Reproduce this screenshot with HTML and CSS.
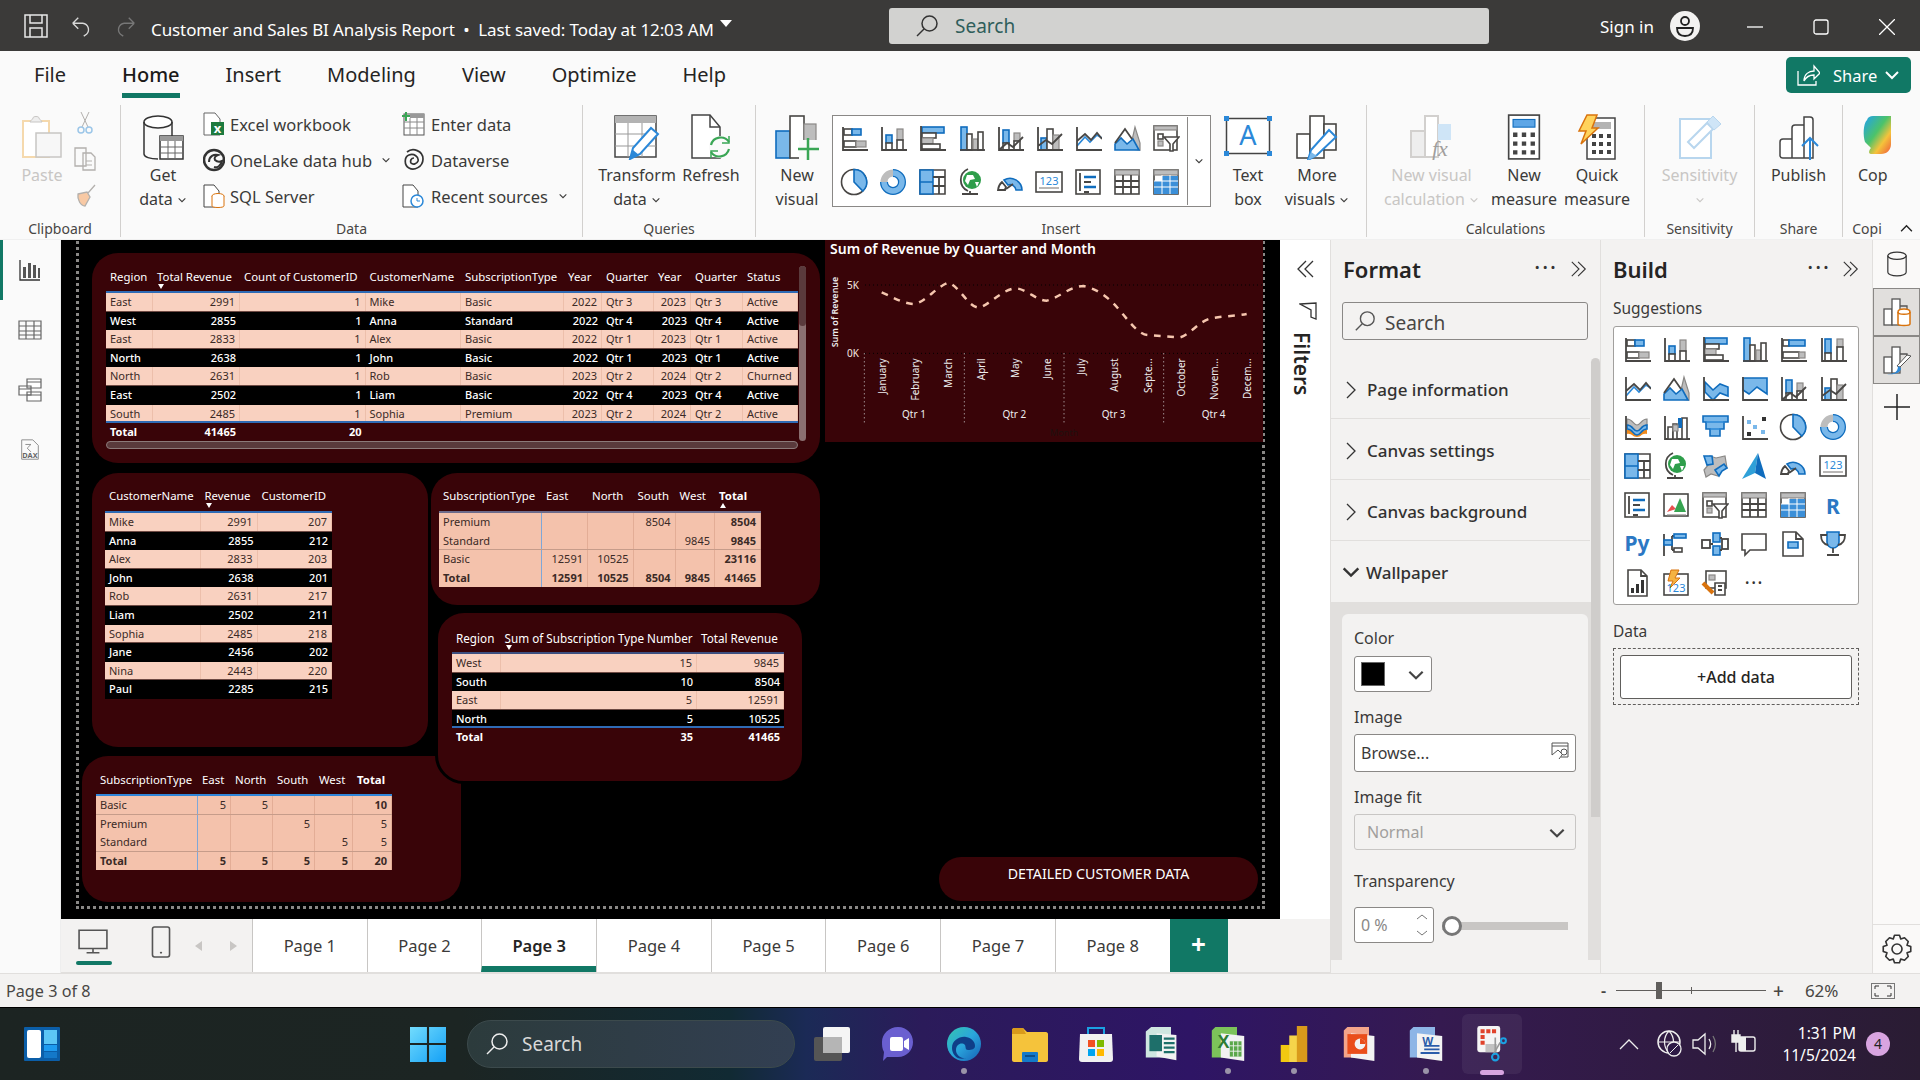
FILE: index.html
```html
<!DOCTYPE html>
<html lang="en">
<head>
<meta charset="utf-8">
<title>Customer and Sales BI Analysis Report</title>
<link rel="stylesheet" href="styles.css">
</head>
<body>
<svg class="defs" width="0" height="0">
<defs>
<linearGradient id="cop" x1="0" y1="0" x2="1" y2="1"><stop offset="0" stop-color="#1fa0f0"/><stop offset=".45" stop-color="#4cc36a"/><stop offset=".7" stop-color="#f5c33b"/><stop offset="1" stop-color="#ee5a3a"/></linearGradient>
<linearGradient id="st" x1="0" y1="0" x2="1" y2="1"><stop offset="0" stop-color="#72dcfd"/><stop offset="1" stop-color="#14a0f6"/></linearGradient>
<linearGradient id="edge" x1="0" y1="0" x2="1" y2="1"><stop offset="0" stop-color="#35c6b0"/><stop offset=".5" stop-color="#2aa5dc"/><stop offset="1" stop-color="#155fb5"/></linearGradient>
<symbol id="hstack" viewBox="0 0 28 28"><rect class="w" x="4" y="5" width="8" height="6"/><rect class="b" x="12" y="5" width="9" height="6"/><rect class="w" x="4" y="17" width="12" height="6"/><rect class="g" x="16" y="17" width="10" height="6"/><path class="k" d="M3 3v23h25"/></symbol>
<symbol id="vstack" viewBox="0 0 28 28"><rect class="b" x="7" y="11" width="6" height="8"/><rect class="w" x="7" y="19" width="6" height="7"/><rect class="g" x="18" y="5" width="6" height="11"/><rect class="w" x="18" y="16" width="6" height="10"/><path class="k" d="M3 3v23h25"/></symbol>
<symbol id="hclus" viewBox="0 0 28 28"><rect class="b" x="4" y="3" width="22" height="6"/><rect class="w" x="4" y="9" width="14" height="5"/><rect class="g" x="4" y="14" width="11" height="6"/><rect class="w" x="4" y="20" width="18" height="5"/><path class="k" d="M3 2v24h25"/></symbol>
<symbol id="vclus" viewBox="0 0 28 28"><rect class="b" x="4" y="3" width="6" height="23"/><rect class="w" x="10" y="10" width="5" height="16"/><rect class="g" x="16" y="15" width="5" height="11"/><rect class="w" x="21" y="8" width="5" height="18"/><path class="k" d="M3 26h25"/></symbol>
<symbol id="h100" viewBox="0 0 28 28"><rect class="w" x="4" y="5" width="6" height="6"/><rect class="b" x="10" y="5" width="16" height="6"/><rect class="w" x="4" y="17" width="16" height="6"/><rect class="g" x="20" y="17" width="6" height="6"/><path class="k" d="M3 3v23h25"/></symbol>
<symbol id="v100" viewBox="0 0 28 28"><rect class="b" x="6" y="4" width="6" height="14"/><rect class="w" x="6" y="18" width="6" height="8"/><rect class="g" x="18" y="4" width="6" height="8"/><rect class="w" x="18" y="12" width="6" height="14"/><path class="k" d="M3 3v23h25"/></symbol>
<symbol id="line" viewBox="0 0 28 28"><path class="l" d="M3 22 11 13l5 5 7-7 5 3"/><path class="k" d="M3 17l8-7 6 6 6-7 5 6M3 3v23h25"/></symbol>
<symbol id="area" viewBox="0 0 28 28"><path class="g" d="M17 25 22 3l5 16v7z"/><path class="b" d="M2 26v-6l6-6 6 6 6-5 6 11z"/><path class="k" d="M2 19 12 5l7 10"/></symbol>
<symbol id="starea" viewBox="0 0 28 28"><path class="b" d="M4 8l8 8 7-6 8 3v9l-8-3-7 7-8-8z"/><path class="k" d="M3 3v23h25"/></symbol>
<symbol id="a100" viewBox="0 0 28 28"><path class="b" d="M3 4h24v16l-10-7-8 7-6-4z"/><path class="k" d="M3 3v23h25"/></symbol>
<symbol id="lstack" viewBox="0 0 28 28"><rect class="b" x="7" y="6" width="6" height="13"/><rect class="w" x="7" y="19" width="6" height="7"/><rect class="g" x="18" y="9" width="6" height="8"/><rect class="w" x="18" y="17" width="6" height="9"/><path class="k" d="M3 26l8-7 6 4 10-10M3 3v23h25"/></symbol>
<symbol id="lclus" viewBox="0 0 28 28"><rect class="b" x="6" y="14" width="6" height="12"/><rect class="w" x="12" y="5" width="6" height="21"/><rect class="g" x="18" y="11" width="6" height="15"/><path class="k" d="M3 22l8-6 6 4 10-10M3 3v23h25"/></symbol>
<symbol id="ribbon" viewBox="0 0 28 28"><path class="g" d="M4 6c6 0 6 6 10 6s4-6 10-6v6c-6 0-6 6-10 6S10 12 4 12z"/><path d="M4 17c6-1 5 4 10 4s6-5 10-4v4c-6-1-5 3-10 3s-5-4-10-3z" fill="#f08a1c"/><path class="b" d="M4 12c6 0 6 6 10 6s4-6 10-6v4c-6 0-6 6-10 6S10 16 4 16z"/><path class="k" d="M3 3v23h25"/></symbol>
<symbol id="water" viewBox="0 0 28 28"><path class="k" d="M3 3v23h25"/><path class="w" d="M6 14h5v12H6zM20 5h5v21h-5z"/><path class="w" d="M11 11h4v15h-4z"/><rect x="16" y="5" width="4" height="10" fill="#0f6cbd"/><path class="g" d="M11 12h5v6h-5z"/></symbol>
<symbol id="funnel" viewBox="0 0 28 28"><path class="b" d="M2 3h25v6h-4v7h-4v7h-10v-7h-4V9H2z"/><path class="l" d="M5 9h19M9 16h11"/></symbol>
<symbol id="scatter" viewBox="0 0 28 28"><path class="k" d="M3 3v23h25"/><rect x="7" y="7" width="4" height="4" fill="#7ab8ea"/><rect x="22" y="4" width="4" height="4" fill="#333"/><rect x="13" y="12" width="4" height="4" fill="#7ab8ea"/><rect x="7" y="19" width="4" height="4" fill="#333"/><rect x="21" y="17" width="4" height="4" fill="#7ab8ea"/></symbol>
<symbol id="pie" viewBox="0 0 28 28"><circle class="w" cx="14" cy="14" r="12.5"/><path class="b" d="M14 1.5A12.5 12.5 0 0 1 22.800 23L14 14z"/></symbol>
<symbol id="donut" viewBox="0 0 28 28"><circle cx="14" cy="14" r="9" fill="none" stroke="#bdbdbd" stroke-width="7"/><path d="M14 5a9 9 0 1 1-9 9" fill="none" stroke="#0f6cbd" stroke-width="8"/><path d="M14 5a9 9 0 1 1-9 9" fill="none" stroke="#7ab8ea" stroke-width="5.500"/></symbol>
<symbol id="tree" viewBox="0 0 28 28"><path class="w" d="M2 2h25v24H2z"/><path class="b" d="M2 2h13v12H2zM2 14h13v12H2z"/><path class="k" d="M15 9h12M21 9v17M15 18h12"/></symbol>
<symbol id="globe" viewBox="0 0 28 28"><circle cx="15" cy="12" r="9" fill="#2e9e4b"/><path d="M10 7h6l2 4-5 1-2 5-3-4zM18 14h4l-2 5z" fill="#fff"/><path class="k" d="M11 1a12 12 0 0 0 0 22M5 26h16M13 23v3"/></symbol>
<symbol id="fmap" viewBox="0 0 28 28"><path class="g" d="M9 4l6 2 9-2 2 12-6 2-3 6-7-2-5 3-2-7 5-6z"/><path class="b" d="M3 4h8l1 8-6 1zM14 18l9-6 3 4-5 3-3 5z"/></symbol>
<symbol id="azmap" viewBox="0 0 28 28"><path d="M18 1 2 27l13-6z" fill="#2fa0d8"/><path d="M18 1l-3 20 11 6z" fill="#0f6cbd"/></symbol>
<symbol id="gauge" viewBox="0 0 28 28"><path class="k" d="M2 22a12 12 0 0 1 4-8l4 5a5 5 0 0 0-1 3z"/><path class="b" d="M8 12a12 12 0 0 1 18 10h-6a6 6 0 0 0-8-5z"/><path class="k" d="M10 21l7-5" stroke-width="2"/></symbol>
<symbol id="card" viewBox="0 0 28 28"><rect class="w" x="1" y="4" width="26" height="20"/><text class="n" x="14" y="17" text-anchor="middle">123</text><path class="g" d="M4 20h20"/></symbol>
<symbol id="multi" viewBox="0 0 28 28"><rect class="w" x="2" y="2" width="24" height="24"/><path class="l2" d="M10 9h12M10 19h12"/><path class="k" d="M6 5v18M10 14h7M10 24h5"/></symbol>
<symbol id="kpi" viewBox="0 0 28 28"><rect class="w" x="2" y="3" width="24" height="22"/><path d="M5 21l5-7 4 4z" fill="#e94f4f"/><path d="M12 21l6-14 6 14z" fill="#37a451"/><path class="g" d="M5 24h19"/></symbol>
<symbol id="slicer" viewBox="0 0 28 28"><rect class="w" x="2" y="2" width="23" height="24"/><rect class="g" x="2" y="2" width="23" height="4"/><rect class="w" x="6" y="10" width="5" height="5"/><rect class="g" x="6" y="17" width="5" height="5"/><path class="w" d="M12 13h15l-6 7v7h-3v-7z"/></symbol>
<symbol id="table" viewBox="0 0 28 28"><rect class="w" x="2" y="2" width="24" height="24"/><rect class="g" x="2" y="2" width="24" height="5"/><path class="k" d="M10 7v19M18 7v19M2 13h24M2 19h24"/></symbol>
<symbol id="matrix" viewBox="0 0 28 28"><rect class="w" x="2" y="2" width="24" height="24"/><rect x="10" y="8" width="16" height="18" fill="#3b8fd8"/><rect x="2" y="13" width="8" height="13" fill="#3b8fd8"/><rect class="g" x="2" y="2" width="24" height="5"/><path class="wl" d="M10 7v19M18 7v19M2 13h24M2 19h24"/></symbol>
<symbol id="rlang" viewBox="0 0 28 28"><text class="rl" x="14" y="23" text-anchor="middle">R</text></symbol>
<symbol id="py" viewBox="0 0 28 28"><text class="rl" x="14" y="21" text-anchor="middle">Py</text></symbol>
<symbol id="decomp" viewBox="0 0 28 28"><path class="k" d="M2 4v22M2 13h8M10 6h14M10 20h8M10 6v14"/><rect class="b" x="2" y="10" width="8" height="5"/><rect class="b" x="12" y="4" width="12" height="4"/><rect class="w" x="12" y="18" width="8" height="4"/></symbol>
<symbol id="keyinf" viewBox="0 0 28 28"><rect class="k" x="1" y="10" width="8" height="8"/><rect class="b" x="12" y="3" width="7" height="9"/><rect class="b" x="12" y="16" width="7" height="9"/><rect class="k" x="21" y="9" width="6" height="10"/><path class="k" d="M9 14h3M19 8h2M19 20h2"/></symbol>
<symbol id="qa" viewBox="0 0 28 28"><path class="w" d="M2 4h24v16H10l-5 5v-5H2z"/></symbol>
<symbol id="pagin" viewBox="0 0 28 28"><path class="w" d="M4 2h13l7 7v17H4z"/><path class="b" d="M9 12h10v6H9z"/><path class="k" d="M17 2v7h7"/></symbol>
<symbol id="trophy" viewBox="0 0 28 28"><path class="b" d="M8 2h12v10a6 6 0 0 1-12 0z"/><path class="k" d="M8 5H2c0 6 2 9 7 10M20 5h6c0 6-2 9-7 10M14 18v5M8 25h12"/></symbol>
<symbol id="report" viewBox="0 0 28 28"><path class="w" d="M5 1h13l6 6v20H5z"/><path class="k" d="M18 1v6h6"/><rect x="8" y="19" width="3" height="5" fill="#333"/><rect x="13" y="15" width="3" height="9" fill="#333"/><rect x="18" y="11" width="3" height="13" fill="#333"/></symbol>
<symbol id="powerbi" viewBox="0 0 28 28"><rect class="w" x="2" y="5" width="24" height="21"/><path d="M9 1h8l-4 8h5L8 19l3-7H6z" fill="#f5b342" stroke="#d9730d"/><text class="n" x="14" y="23" text-anchor="middle">123</text></symbol>
<symbol id="papps" viewBox="0 0 28 28"><rect class="w" x="5" y="2" width="20" height="17"/><rect class="g" x="8" y="6" width="6" height="5"/><path d="M2 14l10 10" stroke="#d9730d" stroke-width="4"/><path class="w" d="M14 14h10v12H14z"/><path class="k" d="M17 17h4M17 21h4"/></symbol>
<symbol id="xbar" viewBox="0 0 44 46"><rect class="b" x="1" y="17" width="14" height="27"/><rect class="w" x="15" y="2" width="14" height="42"/><rect class="g" x="29" y="10" width="12" height="28"/><rect x="24" y="26" width="20" height="20" fill="#fafafa"/><path d="M33 24v22M23 35h21" stroke="#3aa655" stroke-width="2.500"/></symbol>
<symbol id="more" viewBox="0 0 44 46"><rect class="w" x="2" y="20" width="13" height="24"/><rect class="w" x="15" y="2" width="14" height="42"/><rect class="w" x="29" y="10" width="12" height="26"/><path d="M13 46l3-10L34 16l7 7-19 18z" fill="#fff" stroke="#2b88d8" stroke-width="2"/><path d="M13 46l3-8 6 4z" fill="#7ab8ea"/></symbol>
<symbol id="paste" viewBox="0 0 40 44"><rect x="1" y="6" width="26" height="36" fill="#fff" stroke="#f5d9ad" stroke-width="2"/><path d="M8 7c0-2 3-2 3-4s6-2 6 0 3 2 3 4z" fill="#eee" stroke="#c8c6c4"/><rect x="14" y="18" width="25" height="24" fill="#f7f7f7" stroke="#c8c6c4" stroke-width="1.500"/></symbol>
<symbol id="getdata" viewBox="0 0 42 46"><ellipse cx="16" cy="8" rx="14" ry="6" fill="#fff" stroke="#333" stroke-width="1.500"/><path d="M2 8v32c0 3 6 5 14 5" fill="none" stroke="#333" stroke-width="1.500"/><path d="M30 8v14" stroke="#333" stroke-width="1.500"/><rect x="18" y="22" width="23" height="23" fill="#fff" stroke="#333" stroke-width="1.500"/><rect x="18" y="22" width="23" height="5" fill="#999"/><path d="M26 27v18M33 27v18M18 33h23M18 39h23" stroke="#666"/></symbol>
<symbol id="transform" viewBox="0 0 46 46"><rect x="1" y="2" width="41" height="41" fill="#fff" stroke="#444" stroke-width="1.500"/><rect x="1" y="2" width="41" height="7" fill="#b3b3b3"/><path d="M14 9v34M28 9v34M1 20h41M1 32h41" stroke="#999"/><path d="M16 45l3-11 18-20 7 6-18 20z" fill="#fff" stroke="#2b88d8" stroke-width="2"/><path d="M16 45l3-9 6 5z" fill="#2b88d8"/></symbol>
<symbol id="refresh" viewBox="0 0 42 46"><path d="M2 1h18l10 12v31H2z" fill="#fff" stroke="#444" stroke-width="1.500"/><path d="M20 1v12h10" fill="none" stroke="#444" stroke-width="1.500"/><circle cx="30" cy="33" r="11" fill="#fafafa"/><path d="M21 31a10 10 0 0 1 18-3M39 35a10 10 0 0 1-18 3" fill="none" stroke="#3aa655" stroke-width="2.200"/><path d="M39 22v7h-7M21 44v-7h7" fill="none" stroke="#3aa655" stroke-width="1.500"/></symbol>
<symbol id="textbox" viewBox="0 0 48 40"><rect x="2.500" y="2.500" width="43" height="35" fill="#fff" stroke="#444" stroke-width="1.500"/><text class="ta" x="24" y="29" text-anchor="middle">A</text><path d="M0 0h5v5H0zM43 0h5v5h-5zM0 35h5v5H0zM43 35h5v5h-5z" fill="#2b88d8"/></symbol>
<symbol id="vcalc" viewBox="0 0 44 46"><rect x="1" y="17" width="14" height="26" fill="#eee" stroke="#d2d0ce" stroke-width="2"/><rect x="15" y="2" width="13" height="41" fill="#fff" stroke="#d2d0ce" stroke-width="2"/><rect x="28" y="10" width="13" height="16" fill="#cfe5f7"/><text class="fx" x="22" y="42">fx</text></symbol>
<symbol id="calc" viewBox="0 0 30 42"><rect x="1" y="1" width="28" height="40" fill="#fff" stroke="#444" stroke-width="1.500"/><rect x="5" y="5" width="20" height="7" fill="#5ea6e6" stroke="#0f6cbd"/><path d="M5 17h4v4H5zM13 17h4v4h-4zM21 17h4v4h-4zM5 25h4v4H5zM13 25h4v4h-4zM21 25h4v4h-4zM5 33h4v4H5zM13 33h4v4h-4zM21 33h4v4h-4z" fill="#444"/></symbol>
<symbol id="quick" viewBox="0 0 38 46"><rect x="9" y="4" width="28" height="41" fill="#fff" stroke="#444" stroke-width="1.500"/><rect x="13" y="8" width="20" height="7" fill="#b3b3b3"/><path d="M14 20h4v4h-4zM21 20h4v4h-4zM29 20h4v4h-4zM14 28h4v4h-4zM21 28h4v4h-4zM29 28h4v4h-4zM14 36h4v4h-4zM21 36h4v4h-4zM29 36h4v4h-4z" fill="#444"/><path d="M9 1h10l-5 13h6L3 30l5-13H1z" fill="#ffd35c" stroke="#d9730d" stroke-width="1.500"/></symbol>
<symbol id="sens" viewBox="0 0 42 46"><rect x="1" y="5" width="31" height="39" fill="#fff" stroke="#b8d6ee" stroke-width="2"/><path d="M9 28 28 9l6 6-19 19z" fill="#fff" stroke="#b8d6ee" stroke-width="2"/><path d="M28 8l6-6 8 8-7 6z" fill="#cfe5f7" stroke="#b8d6ee"/></symbol>
<symbol id="publish" viewBox="0 0 40 46"><path d="M1 42V28a3 3 0 0 1 3-3h9v19H4a3 3 0 0 1-3-2zM13 14a3 3 0 0 1 3-3h9v33H13zM25 3h6a3 3 0 0 1 3 3v38h-9z" fill="#fff" stroke="#444" stroke-width="1.500"/><path d="M31 46V24M23 32l8-8 8 8" fill="none" stroke="#2b88d8" stroke-width="2"/></symbol>
<symbol id="search" viewBox="0 0 24 24"><circle cx="14.500" cy="9.500" r="7.500" fill="none" stroke="currentColor" stroke-width="1.500"/><path d="M9 15 2 22" stroke="currentColor" stroke-width="1.500"/></symbol>
<symbol id="chev" viewBox="0 0 12 12"><path d="M2 4l4 4 4-4" fill="none" stroke="currentColor" stroke-width="1.300"/></symbol>
<symbol id="right" viewBox="0 0 12 20"><path d="M2 2l8 8-8 8" fill="none" stroke="currentColor" stroke-width="1.300"/></symbol>
<symbol id="dbl" viewBox="0 0 20 20"><path d="M2 2l8 8-8 8M9 2l8 8-8 8" fill="none" stroke="currentColor" stroke-width="1.200"/></symbol>
<symbol id="dbll" viewBox="0 0 20 20"><path d="M18 2l-8 8 8 8M11 2l-8 8 8 8" fill="none" stroke="currentColor" stroke-width="1.300"/></symbol>
</defs>
</svg>

<div class="app">
  <header class="titlebar">
    <svg class="tb-save" viewBox="0 0 24 24"><path d="M1 1h22v22H1zM6 1v8h12V1M6 23v-9h12v9" fill="none" stroke="#e8e8e8" stroke-width="1.500"/></svg>
    <svg class="tb-undo" viewBox="0 0 24 24"><path d="M3 9h11a7 7 0 0 1 4 12l-3 2M3 9l6-6M3 9l6 6" fill="none" stroke="#d8d8d8" stroke-width="1.500"/></svg>
    <svg class="tb-redo" viewBox="0 0 24 24"><path d="M21 9H10a7 7 0 0 0-4 12l3 2M21 9l-6-6M21 9l-6 6" fill="none" stroke="#777" stroke-width="1.500"/></svg>
    <span class="tb-title">Customer and Sales BI Analysis Report&nbsp;&nbsp;•&nbsp;&nbsp;Last saved: Today at 12:03 AM</span>
    <span class="tb-caret"></span>
    <div class="tb-search"><svg class="tb-sicon"><use href="#search"/></svg><span>Search</span></div>
    <span class="tb-sign">Sign in</span>
    <svg class="tb-avatar" viewBox="0 0 30 30"><circle cx="15" cy="15" r="15" fill="#f3f2f1"/><circle cx="15" cy="10" r="4" fill="none" stroke="#222" stroke-width="1.800"/><path d="M7 17h16c0 5-3 8-8 8s-8-3-8-8z" fill="none" stroke="#222" stroke-width="1.800"/></svg>
    <div class="tb-win">
      <svg viewBox="0 0 16 16"><path d="M0 8h16" stroke="#fff" stroke-width="1.300"/></svg>
      <svg viewBox="0 0 16 16"><rect x="1" y="1" width="14" height="14" rx="2" fill="none" stroke="#fff" stroke-width="1.300"/></svg>
      <svg viewBox="0 0 16 16"><path d="M0 0l16 16M16 0 0 16" stroke="#fff" stroke-width="1.300"/></svg>
    </div>
  </header>

  <nav class="tabs">
    <span class="tab t-file">File</span><span class="tab on">Home</span><span class="tab">Insert</span><span class="tab">Modeling</span><span class="tab">View</span><span class="tab">Optimize</span><span class="tab">Help</span>
    <button class="share"><svg viewBox="0 0 24 24"><path d="M2 8v14h18v-4M8 18c0-7 5-10 10-10V3l6 7-6 6v-4c-5 0-8 2-10 6z" fill="none" stroke="#fff" stroke-width="1.300"/></svg><span>Share</span><svg class="share-chev"><use href="#chev"/></svg></button>
  </nav>

  <section class="ribbon">
    <div class="grp g-clip">
      <div class="grp-body">
        <div class="big paste"><svg class="ico-paste"><use href="#paste"/></svg><span class="lbl dis">Paste</span></div>
        <div class="mini">
          <svg viewBox="0 0 16 24"><path d="M4 1l7 15M12 1 5 16" stroke="#b3b0ad" fill="none"/><circle cx="4" cy="19" r="3" fill="none" stroke="#9cc6e8" stroke-width="1.500"/><circle cx="12" cy="19" r="3" fill="none" stroke="#9cc6e8" stroke-width="1.500"/></svg>
          <svg viewBox="0 0 24 24"><path d="M2 1h11v18H2zM10 6h8l4 4v13H10z" fill="#fafafa" stroke="#b3b0ad" stroke-width="1.300"/><path d="M13 14h6M13 18h6" stroke="#b3b0ad"/></svg>
          <svg viewBox="0 0 24 24"><path d="M15 10 22 2M5 11l9-2 3 5-5 9c-4 0-8-6-7-12z" fill="#f8c9a4" stroke="#b3b0ad" stroke-width="1.300"/></svg>
        </div>
      </div>
      <div class="grp-lbl">Clipboard</div>
    </div>

    <div class="grp g-data">
      <div class="grp-body">
        <div class="big getdata"><svg class="ico-46"><use href="#getdata"/></svg><span class="lbl">Get</span><span class="lbl">data <svg class="cv"><use href="#chev"/></svg></span></div>
        <div class="slist c2">
          <div class="srow"><svg viewBox="0 0 22 24"><path d="M1 1h11l5 6v16H1z" fill="#fff" stroke="#666"/><rect x="8" y="10" width="13" height="13" fill="#1d7a3e"/><text class="xl" x="14.500" y="21" text-anchor="middle">x</text></svg><span>Excel workbook</span></div>
          <div class="srow"><svg viewBox="0 0 22 24"><circle cx="11" cy="12" r="10" fill="none" stroke="#333" stroke-width="2.500"/><path d="M6 14c0-6 5-8 9-7-3 1-4 3-3 5 2 2 5 2 7 1-1 5-5 7-8 6" fill="none" stroke="#333" stroke-width="2"/></svg><span>OneLake data hub</span><svg class="cv"><use href="#chev"/></svg></div>
          <div class="srow"><svg viewBox="0 0 22 24"><path d="M1 1h10l5 6v16H1z" fill="#fff" stroke="#444"/><ellipse cx="15" cy="12" rx="6" ry="2.500" fill="#fff" stroke="#d9730d"/><path d="M9 12v10c0 2 12 2 12 0V12" fill="#fff" stroke="#d9730d"/></svg><span>SQL Server</span></div>
        </div>
        <div class="slist c3">
          <div class="srow"><svg viewBox="0 0 24 24"><rect x="3" y="2" width="20" height="21" fill="#fff" stroke="#555"/><rect x="9" y="2" width="14" height="4" fill="#999"/><path d="M3 10h20M3 16h20M9 6v17M16 6v17" stroke="#888"/><path d="M5 0v9M1 4h8" stroke="#3aa655" stroke-width="2"/></svg><span>Enter data</span></div>
          <div class="srow"><svg viewBox="0 0 24 24"><path d="M6 4c6-5 16-1 16 7 0 8-9 12-14 9C3 17 3 9 8 7c5-2 10 2 9 6-1 3-5 4-7 2-1-2 0-5 3-5" fill="none" stroke="#333" stroke-width="1.700"/></svg><span>Dataverse</span></div>
          <div class="srow"><svg viewBox="0 0 24 24"><path d="M2 1h10l5 6v16H2z" fill="#fff" stroke="#444"/><circle cx="16" cy="17" r="6" fill="#fff" stroke="#2b88d8" stroke-width="1.500"/><path d="M16 14v3h3" fill="none" stroke="#2b88d8"/></svg><span>Recent sources</span><svg class="cv"><use href="#chev"/></svg></div>
        </div>
      </div>
      <div class="grp-lbl">Data</div>
    </div>

    <div class="grp g-query">
      <div class="grp-body">
        <div class="big w74"><svg class="ico-46"><use href="#transform"/></svg><span class="lbl">Transform</span><span class="lbl">data <svg class="cv"><use href="#chev"/></svg></span></div>
        <div class="big w74"><svg class="ico-46"><use href="#refresh"/></svg><span class="lbl">Refresh</span></div>
      </div>
      <div class="grp-lbl">Queries</div>
    </div>

    <div class="grp g-insert">
      <div class="grp-body">
        <div class="big w70"><svg class="ico-46"><use href="#xbar"/></svg><span class="lbl">New</span><span class="lbl">visual</span></div>
        <div class="gallery">
          <div class="gal-grid">
            <svg><use href="#hstack"/></svg><svg><use href="#vstack"/></svg><svg><use href="#hclus"/></svg><svg><use href="#vclus"/></svg><svg><use href="#lstack"/></svg><svg><use href="#lclus"/></svg><svg><use href="#line"/></svg><svg><use href="#area"/></svg><svg><use href="#slicer"/></svg>
            <svg><use href="#pie"/></svg><svg><use href="#donut"/></svg><svg><use href="#tree"/></svg><svg><use href="#globe"/></svg><svg><use href="#gauge"/></svg><svg><use href="#card"/></svg><svg><use href="#multi"/></svg><svg><use href="#table"/></svg><svg><use href="#matrix"/></svg>
          </div>
          <div class="gal-more"><svg class="cv"><use href="#chev"/></svg></div>
        </div>
        <div class="big w74 tbx"><svg class="ico-tb"><use href="#textbox"/></svg><span class="lbl">Text</span><span class="lbl">box</span></div>
        <div class="big w64"><svg class="ico-46"><use href="#more"/></svg><span class="lbl">More</span><span class="lbl">visuals <svg class="cv"><use href="#chev"/></svg></span></div>
      </div>
      <div class="grp-lbl">Insert</div>
    </div>

    <div class="grp g-calc">
      <div class="grp-body">
        <div class="big w101"><svg class="ico-46"><use href="#vcalc"/></svg><span class="lbl dis">New visual</span><span class="lbl dis">calculation <svg class="cv"><use href="#chev"/></svg></span></div>
        <div class="big w84"><svg class="ico-46"><use href="#calc"/></svg><span class="lbl">New</span><span class="lbl">measure</span></div>
        <div class="big w62"><svg class="ico-46"><use href="#quick"/></svg><span class="lbl">Quick</span><span class="lbl">measure</span></div>
      </div>
      <div class="grp-lbl">Calculations</div>
    </div>

    <div class="grp g-sens">
      <div class="grp-body">
        <div class="big wfull"><svg class="ico-46"><use href="#sens"/></svg><span class="lbl dis">Sensitivity</span><span class="lbl dis"><svg class="cv"><use href="#chev"/></svg></span></div>
      </div>
      <div class="grp-lbl">Sensitivity</div>
    </div>

    <div class="grp g-share">
      <div class="grp-body">
        <div class="big wfull"><svg class="ico-46"><use href="#publish"/></svg><span class="lbl">Publish</span></div>
      </div>
      <div class="grp-lbl">Share</div>
    </div>

    <div class="grp g-cop">
      <div class="grp-body">
        <div class="big copilot"><svg class="ico-cop" viewBox="0 0 28 44"><path d="M10 2h18v28c0 6-4 10-10 10H8c-3 0-2-4 0-6L2 28C0 22 0 10 4 6c1-3 3-4 6-4z" fill="url(#cop)"/></svg><span class="lbl">Cop</span></div>
      </div>
      <div class="grp-lbl">Copi</div>
    </div>
    <svg class="rb-collapse" viewBox="0 0 14 10"><path d="M1 8l6-6 6 6" fill="none" stroke="#222" stroke-width="1.500"/></svg>
  </section>

  <main class="work">
    <aside class="rail">
      <div class="rail-btn on"><svg viewBox="0 0 24 24"><path d="M2 2v20h20" fill="none" stroke="#333" stroke-width="1.300"/><path d="M5 20V9h3v11zM10 20V5h3v15zM15 20V7h3v13zM20 20V10h2v10z" fill="#555"/></svg></div>
      <div class="rail-btn"><svg viewBox="0 0 24 24"><path d="M1 3h22v18H1zM1 8h22M1 13h22M1 17h22M8 3v18M16 3v18" fill="none" stroke="#666" stroke-width="1.200"/></svg></div>
      <div class="rail-btn"><svg viewBox="0 0 24 24"><path d="M9 1h14v9H9zM1 8h12v9H1zM9 14h14v9H9z" fill="#fff" stroke="#666" stroke-width="1.200"/><path d="M1 11h12M9 4h14M9 17h14" stroke="#666"/></svg></div>
      <div class="rail-btn"><svg viewBox="0 0 26 26"><path d="M4 2h12l6 6v15H4z" fill="none" stroke="#888"/><text class="dax" x="13" y="22" text-anchor="middle">DAX</text><path d="M8 7h6l-4 4 4 4" fill="none" stroke="#888"/></svg></div>
    </aside>

    <div class="center">
      <div class="stage">
        <div class="canvas">
          <div class="dots"></div>

          <div class="panel p1">
            <div class="tbl t1">
              <div class="row hd"><span>Region</span><span class="sort">Total Revenue</span><span>Count of CustomerID</span><span>CustomerName</span><span>SubscriptionType</span><span>Year</span><span>Quarter</span><span>Year</span><span>Quarter</span><span>Status</span></div>
              <div class="row o"><span>East</span><span class="r">2991</span><span class="r">1</span><span>Mike</span><span>Basic</span><span class="r">2022</span><span>Qtr 3</span><span class="r">2023</span><span>Qtr 3</span><span>Active</span></div>
              <div class="row e"><span>West</span><span class="r">2855</span><span class="r">1</span><span>Anna</span><span>Standard</span><span class="r">2022</span><span>Qtr 4</span><span class="r">2023</span><span>Qtr 4</span><span>Active</span></div>
              <div class="row o"><span>East</span><span class="r">2833</span><span class="r">1</span><span>Alex</span><span>Basic</span><span class="r">2022</span><span>Qtr 1</span><span class="r">2023</span><span>Qtr 1</span><span>Active</span></div>
              <div class="row e"><span>North</span><span class="r">2638</span><span class="r">1</span><span>John</span><span>Basic</span><span class="r">2022</span><span>Qtr 1</span><span class="r">2023</span><span>Qtr 1</span><span>Active</span></div>
              <div class="row o"><span>North</span><span class="r">2631</span><span class="r">1</span><span>Rob</span><span>Basic</span><span class="r">2023</span><span>Qtr 2</span><span class="r">2024</span><span>Qtr 2</span><span>Churned</span></div>
              <div class="row e"><span>East</span><span class="r">2502</span><span class="r">1</span><span>Liam</span><span>Basic</span><span class="r">2022</span><span>Qtr 4</span><span class="r">2023</span><span>Qtr 4</span><span>Active</span></div>
              <div class="row o last"><span>South</span><span class="r">2485</span><span class="r">1</span><span>Sophia</span><span>Premium</span><span class="r">2023</span><span>Qtr 2</span><span class="r">2024</span><span>Qtr 2</span><span>Active</span></div>
              <div class="row tot"><span>Total</span><span class="r">41465</span><span class="r">20</span><span></span><span></span><span></span><span></span><span></span><span></span><span></span></div>
            </div>
            <div class="sb-h"></div>
            <div class="sb-v"><div class="sb-v-thumb"></div></div>
          </div>

          <div class="panel p2">
            <div class="tbl t2">
              <div class="row hd"><span>CustomerName</span><span class="sort">Revenue</span><span>CustomerID</span></div>
              <div class="row o"><span>Mike</span><span class="r">2991</span><span class="r">207</span></div>
              <div class="row e"><span>Anna</span><span class="r">2855</span><span class="r">212</span></div>
              <div class="row o"><span>Alex</span><span class="r">2833</span><span class="r">203</span></div>
              <div class="row e"><span>John</span><span class="r">2638</span><span class="r">201</span></div>
              <div class="row o"><span>Rob</span><span class="r">2631</span><span class="r">217</span></div>
              <div class="row e"><span>Liam</span><span class="r">2502</span><span class="r">211</span></div>
              <div class="row o"><span>Sophia</span><span class="r">2485</span><span class="r">218</span></div>
              <div class="row e"><span>Jane</span><span class="r">2456</span><span class="r">202</span></div>
              <div class="row o"><span>Nina</span><span class="r">2443</span><span class="r">220</span></div>
              <div class="row e"><span>Paul</span><span class="r">2285</span><span class="r">215</span></div>
            </div>
          </div>

          <div class="panel p3">
            <div class="tbl t3">
              <div class="row hd"><span>SubscriptionType</span><span>East</span><span>North</span><span>South</span><span>West</span><span class="bd sort up">Total</span></div>
              <div class="row m"><span>Premium</span><span class="r"></span><span class="r"></span><span class="r">8504</span><span class="r"></span><span class="r bd">8504</span></div>
              <div class="row m sep"><span>Standard</span><span class="r"></span><span class="r"></span><span class="r"></span><span class="r">9845</span><span class="r bd">9845</span></div>
              <div class="row m"><span>Basic</span><span class="r">12591</span><span class="r">10525</span><span class="r"></span><span class="r"></span><span class="r bd">23116</span></div>
              <div class="row m bd"><span>Total</span><span class="r">12591</span><span class="r">10525</span><span class="r">8504</span><span class="r">9845</span><span class="r">41465</span></div>
            </div>
          </div>

          <div class="panel p5">
            <div class="tbl t5">
              <div class="row hd"><span>SubscriptionType</span><span>East</span><span>North</span><span>South</span><span>West</span><span class="bd">Total</span></div>
              <div class="row m sep"><span>Basic</span><span class="r">5</span><span class="r">5</span><span class="r"></span><span class="r"></span><span class="r bd">10</span></div>
              <div class="row m"><span>Premium</span><span class="r"></span><span class="r"></span><span class="r">5</span><span class="r"></span><span class="r">5</span></div>
              <div class="row m sep"><span>Standard</span><span class="r"></span><span class="r"></span><span class="r"></span><span class="r">5</span><span class="r">5</span></div>
              <div class="row m bd"><span>Total</span><span class="r">5</span><span class="r">5</span><span class="r">5</span><span class="r">5</span><span class="r">20</span></div>
            </div>
          </div>

          <div class="panel p4">
            <div class="tbl t4">
              <div class="row hd"><span>Region</span><span class="sort">Sum of Subscription Type Number</span><span>Total Revenue</span></div>
              <div class="row o"><span>West</span><span class="r">15</span><span class="r">9845</span></div>
              <div class="row e"><span>South</span><span class="r">10</span><span class="r">8504</span></div>
              <div class="row o"><span>East</span><span class="r">5</span><span class="r">12591</span></div>
              <div class="row e last"><span>North</span><span class="r">5</span><span class="r">10525</span></div>
              <div class="row tot"><span>Total</span><span class="r">35</span><span class="r">41465</span></div>
            </div>
          </div>

          <div class="chart">
            <svg viewBox="15 0 1314 606" width="438" height="202">
              <text class="c-title" x="30" y="41">Sum of Revenue by Quarter and Month</text>
              <text class="c-axt" transform="translate(53,322) rotate(-90)">Sum of Revenue</text>
              <text class="c-y" x="117" y="147" text-anchor="end">5K</text>
              <text class="c-y" x="117" y="351" text-anchor="end">0K</text>
              <path class="c-grid" d="M135 135H1330M135 340H1330"/>
              <path class="c-grid" d="M133 340V552M433 340V552M732 340V552M1031 340V552"/>
              <path class="c-line" d="M185 157C220 172 250 192 285 192C320 182 350 140 385 128C420 140 445 203 478 203C515 190 550 145 590 145C625 150 650 182 680 182C715 175 750 138 790 138C825 145 855 165 880 190C915 225 950 285 985 285L1080 292C1110 285 1140 240 1175 235C1210 228 1250 228 1280 222"/>
              <g class="c-m">
                <text transform="translate(197,355) rotate(-90)">January</text>
                <text transform="translate(296,355) rotate(-90)">February</text>
                <text transform="translate(397,355) rotate(-90)">March</text>
                <text transform="translate(496,355) rotate(-90)">April</text>
                <text transform="translate(596,355) rotate(-90)">May</text>
                <text transform="translate(694,355) rotate(-90)">June</text>
                <text transform="translate(796,355) rotate(-90)">July</text>
                <text transform="translate(895,355) rotate(-90)">August</text>
                <text transform="translate(995,355) rotate(-90)">Septe...</text>
                <text transform="translate(1094,355) rotate(-90)">October</text>
                <text transform="translate(1194,355) rotate(-90)">Novem...</text>
                <text transform="translate(1294,355) rotate(-90)">Decem...</text>
              </g>
              <g class="c-q">
                <text x="282" y="533">Qtr 1</text><text x="583" y="533">Qtr 2</text><text x="881" y="533">Qtr 3</text><text x="1181" y="533">Qtr 4</text>
              </g>
              <text class="c-month" x="732" y="587">Month</text>
            </svg>
          </div>

          <div class="pill">DETAILED CUSTOMER DATA</div>
        </div>

        <aside class="filters">
          <svg class="f-dbl"><use href="#dbll"/></svg>
          <svg class="f-fun" viewBox="0 0 18 18"><path d="M1 2 17 1v16l-5-2V8z" fill="none" stroke="#333" stroke-width="1.300"/></svg>
          <span class="f-txt">Filters</span>
        </aside>
      </div>

      <footer class="pagebar">
        <div class="pb-tools">
          <div class="pb-dev on"><svg viewBox="0 0 28 24"><path d="M1 1h26v17H1zM14 18v4M8 22h12" fill="none" stroke="#555" stroke-width="1.500"/></svg></div>
          <div class="pb-dev ph"><svg viewBox="0 0 18 30"><rect x="1" y="1" width="16" height="28" rx="2" fill="none" stroke="#555" stroke-width="1.500"/><path d="M8 25h2" stroke="#555" stroke-width="1.500"/></svg></div>
          <span class="pb-arrow l"></span><span class="pb-arrow"></span>
        </div>
        <span class="pg">Page 1</span><span class="pg">Page 2</span><span class="pg on">Page 3</span><span class="pg">Page 4</span><span class="pg">Page 5</span><span class="pg">Page 6</span><span class="pg">Page 7</span><span class="pg">Page 8</span><span class="pg-add">+</span>
      </footer>
    </div>

    <section class="format">
      <div class="p-head"><h2>Format</h2><span class="p-dots">···</span><svg class="p-dbl"><use href="#dbl"/></svg></div>
      <div class="f-search"><svg class="fs-i"><use href="#search"/></svg><span>Search</span></div>
      <div class="sec first"><svg class="sec-r"><use href="#right"/></svg><span>Page information</span></div>
      <div class="sec"><svg class="sec-r"><use href="#right"/></svg><span>Canvas settings</span></div>
      <div class="sec"><svg class="sec-r"><use href="#right"/></svg><span>Canvas background</span></div>
      <div class="sec nob"><svg class="sec-d"><use href="#chev"/></svg><span>Wallpaper</span></div>
      <div class="wp">
        <div class="wp-card">
          <label>Color</label>
          <div class="fld clr"><i class="swatch"></i><svg class="f-chev"><use href="#chev"/></svg></div>
          <label>Image</label>
          <div class="fld brw"><span>Browse...</span><svg class="brw-i" viewBox="0 0 18 18"><path d="M1 1h16v14H10M1 4h16M1 1v12l6-5 3 3" fill="none" stroke="#555"/><circle cx="13" cy="10" r="3" fill="none" stroke="#555"/><path d="M11 13l-3 4" stroke="#555"/></svg></div>
          <label>Image fit</label>
          <div class="fld nrm"><span>Normal</span><svg class="f-chev"><use href="#chev"/></svg></div>
          <label class="tr">Transparency</label>
          <div class="tr-row">
            <div class="fld pct"><span>0 %</span><div class="spin"><svg viewBox="0 0 12 6"><path d="M1 5l5-4 5 4" fill="none" stroke="#777"/></svg><svg viewBox="0 0 12 6"><path d="M1 1l5 4 5-4" fill="none" stroke="#777"/></svg></div></div>
            <div class="slider"><i class="knob"></i></div>
          </div>
        </div>
      </div>
      <div class="f-sb"></div>
    </section>

    <section class="build">
      <div class="p-head"><h2>Build</h2><span class="p-dots">···</span><svg class="p-dbl"><use href="#dbl"/></svg></div>
      <div class="b-lbl">Suggestions</div>
      <div class="sugg">
        <svg><use href="#hstack"/></svg><svg><use href="#vstack"/></svg><svg><use href="#hclus"/></svg><svg><use href="#vclus"/></svg><svg><use href="#h100"/></svg><svg><use href="#v100"/></svg>
        <svg><use href="#line"/></svg><svg><use href="#area"/></svg><svg><use href="#starea"/></svg><svg><use href="#a100"/></svg><svg><use href="#lstack"/></svg><svg><use href="#lclus"/></svg>
        <svg><use href="#ribbon"/></svg><svg><use href="#water"/></svg><svg><use href="#funnel"/></svg><svg><use href="#scatter"/></svg><svg><use href="#pie"/></svg><svg><use href="#donut"/></svg>
        <svg><use href="#tree"/></svg><svg><use href="#globe"/></svg><svg><use href="#fmap"/></svg><svg><use href="#azmap"/></svg><svg><use href="#gauge"/></svg><svg><use href="#card"/></svg>
        <svg><use href="#multi"/></svg><svg><use href="#kpi"/></svg><svg><use href="#slicer"/></svg><svg><use href="#table"/></svg><svg><use href="#matrix"/></svg><svg><use href="#rlang"/></svg>
        <svg><use href="#py"/></svg><svg><use href="#decomp"/></svg><svg><use href="#keyinf"/></svg><svg><use href="#qa"/></svg><svg><use href="#pagin"/></svg><svg><use href="#trophy"/></svg>
        <svg><use href="#report"/></svg><svg><use href="#powerbi"/></svg><svg><use href="#papps"/></svg><span class="s-more">···</span>
      </div>
      <div class="b-lbl data">Data</div>
      <div class="adddata"><button class="addbtn">+Add data</button></div>
    </section>

    <aside class="rrail">
      <div class="rr-top"><svg viewBox="0 0 24 28"><ellipse cx="12" cy="5" rx="10" ry="4" fill="none" stroke="#333" stroke-width="1.300"/><path d="M2 5v18c0 2 4 4 10 4s10-2 10-4V5" fill="none" stroke="#333" stroke-width="1.300"/></svg></div>
      <div class="rr-sel"><svg viewBox="0 0 28 30"><rect x="1" y="12" width="8" height="16" fill="#fff" stroke="#555" stroke-width="1.300"/><rect x="9" y="2" width="8" height="26" fill="#fff" stroke="#555" stroke-width="1.300"/><path d="M17 9h7v5" fill="none" stroke="#555" stroke-width="1.300"/><path d="M15 15c0-4 12-4 12 0v12c0 2-12 2-12 0z" fill="#fff" stroke="#d9730d" stroke-width="1.500"/><path d="M15 15c0 3 12 3 12 0" fill="none" stroke="#d9730d" stroke-width="1.500"/></svg></div>
      <div class="rr-sel"><svg viewBox="0 0 28 30"><rect x="1" y="12" width="8" height="16" fill="#fff" stroke="#555" stroke-width="1.300"/><rect x="9" y="2" width="8" height="26" fill="#fff" stroke="#555" stroke-width="1.300"/><path d="M17 9h7v5" fill="none" stroke="#555" stroke-width="1.300"/><path d="M28 11 17 22l-3-1 10-11z" fill="#fff" stroke="#555"/><path d="M4 29c6 0 11-1 11-8l3 2c0 5-7 7-14 6z" fill="#2b88d8"/></svg></div>
      <div class="rr-plus"><svg viewBox="0 0 26 26"><path d="M13 0v26M0 13h26" stroke="#222" stroke-width="1.500"/></svg></div>
      <div class="rr-gear"><svg viewBox="0 0 24 24"><path d="M10 1h4l1 3 3-1 3 3-1 3 3 1v4l-3 1 1 3-3 3-3-1-1 3h-4l-1-3-3 1-3-3 1-3-3-1v-4l3-1-1-3 3-3 3 1z" fill="none" stroke="#333" stroke-width="1.300" stroke-linejoin="round"/><circle cx="12" cy="12" r="4" fill="none" stroke="#333" stroke-width="1.300"/></svg></div>
    </aside>
  </main>

  <div class="status">
    <span class="st-page">Page 3 of 8</span>
    <div class="st-zoom">
      <span class="z-m">-</span>
      <div class="z-track"><i class="z-tick"></i><i class="z-thumb"></i></div>
      <span class="z-p">+</span>
      <span class="z-v">62%</span>
      <svg class="z-fit" viewBox="0 0 24 16"><rect x=".5" y=".5" width="23" height="15" fill="none" stroke="#777"/><path d="M4 6V3h4M20 6V3h-4M4 10v3h4M20 10v3h-4" fill="none" stroke="#333"/></svg>
    </div>
  </div>

  <footer class="taskbar">
    <svg class="tk-widget" viewBox="0 0 36 34"><rect width="36" height="34" rx="1" fill="#0b5ea8"/><rect x="3" y="3" width="14" height="28" rx="2" fill="#fff"/><rect x="20" y="3" width="13" height="14" fill="#5cc6f5"/><rect x="20" y="18" width="13" height="6" fill="#1e9bf0"/><rect x="20" y="25" width="13" height="6" fill="#1479c9"/></svg>
    <div class="tk-btn start"><svg viewBox="0 0 34 34"><path d="M0 1h16v15H0zM18 1h16v15H18zM0 18h16v16H0zM18 18h16v16H18z" fill="url(#st)"/></svg></div>
    <div class="tk-search"><svg class="tk-si"><use href="#search"/></svg><span>Search</span></div>
    <div class="tk-apps">
      <div class="tk-btn"><svg viewBox="0 0 36 36"><rect x="0" y="11" width="28" height="24" rx="2" fill="#555"/><rect x="9" y="1" width="27" height="26" rx="2" fill="#f5f5f5"/><rect x="9" y="11" width="19" height="16" fill="#b5b5b5"/></svg></div>
      <div class="tk-btn"><svg viewBox="0 0 36 36"><path d="M18 1c9 0 15 7 15 15s-6 15-15 15H7l-4 4 1-9C2 23 2 19 2 16 2 8 9 1 18 1z" fill="#6a5fd0"/><rect x="10" y="11" width="13" height="14" rx="2" fill="#fff"/><path d="M24 15l5-3v12l-5-3z" fill="#fff"/></svg></div>
      <div class="tk-btn dot"><svg viewBox="0 0 36 36"><circle cx="18" cy="18" r="17" fill="url(#edge)"/><path d="M6 22c0-8 8-12 14-11 6 1 9 5 9 9 0 3-3 4-7 4-3 0-2-3-3-5-3-3-9-1-9 5 0 5 5 9 10 8-8 3-14-3-14-10z" fill="#0f3e88"/></svg></div>
      <div class="tk-btn"><svg viewBox="0 0 36 36"><path d="M0 4c0-1 1-2 2-2h9l4 4h19c1 0 2 1 2 2v26c0 1-1 2-2 2H2c-1 0-2-1-2-2z" fill="#f5c33b"/><path d="M0 4c0-1 1-2 2-2h9l3 6H0z" fill="#d99a1b"/><rect x="10" y="26" width="16" height="10" rx="1" fill="#1479c9"/><path d="M13 30h10" stroke="#0c4f8a" stroke-width="2"/></svg></div>
      <div class="tk-btn"><svg viewBox="0 0 36 36"><path d="M2 8h32l1 25c0 2-1 3-3 3H4c-2 0-3-1-3-3z" fill="#f1f1f1"/><path d="M10 8V2h16v6" fill="none" stroke="#1ba1e2" stroke-width="2"/><rect x="10" y="14" width="7" height="7" fill="#f25022"/><rect x="19" y="14" width="7" height="7" fill="#7fba00"/><rect x="10" y="23" width="7" height="7" fill="#00a4ef"/><rect x="19" y="23" width="7" height="7" fill="#ffb900"/></svg></div>
      <div class="tk-btn"><svg viewBox="0 0 36 40"><path d="M6 1h22v34H0V6z" fill="#cfe6e0"/><path d="M12 8l22 2v28l-22-4z" fill="#f2f2f2"/><path d="M4 10h14v18H4z" fill="#1e6f6a"/><path d="M20 14h12M20 19h12M20 24h12M20 29h12" stroke="#1e6f6a" stroke-width="2.500"/></svg></div>
      <div class="tk-btn dot"><svg viewBox="0 0 36 40"><path d="M4 1h24v34H0V5z" fill="#7cc35a"/><path d="M10 8l26 3v28l-26-4z" fill="#f2f2f2"/><path d="M20 17h13v17H20z" fill="#5aa84a"/><path d="M24 17v17M29 17v17M20 22h13M20 28h13" stroke="#f2f2f2"/><text class="tk-x" x="13" y="24" text-anchor="middle">X</text></svg></div>
      <div class="tk-btn dot"><svg viewBox="0 0 28 38"><rect x="0" y="20" width="10" height="18" fill="#f2c811"/><rect x="9" y="10" width="10" height="28" fill="#f5d44b"/><rect x="17" y="0" width="11" height="38" fill="#d99a1b"/></svg></div>
      <div class="tk-btn"><svg viewBox="0 0 36 40"><path d="M4 1h24v34H0V5z" fill="#f4a58a"/><path d="M8 8l26 3v28l-26-4z" fill="#f3f3f3"/><path d="M4 9h22v22H4z" fill="#ea4e1b"/><circle cx="18" cy="20" r="6" fill="#f3f3f3"/><path d="M18 20h6a6 6 0 0 0-6-6z" fill="#ea4e1b"/></svg></div>
      <div class="tk-btn dot"><svg viewBox="0 0 36 40"><path d="M4 1h24v34H0V5z" fill="#8db5e6"/><path d="M8 8l28 3v28L8 35z" fill="#f3f3f3"/><path d="M16 22h17M16 26h17M12 30h21" stroke="#2a5caa" stroke-width="2"/><text class="tk-w" x="20" y="21" text-anchor="middle">W</text></svg></div>
      <div class="tk-btn act"><svg viewBox="0 0 36 44"><rect x="0" y="0" width="28" height="32" rx="3" fill="#f5f5f5"/><path d="M4 4h5v5H4zM11 4h5v5h-5zM18 4h5v5h-5zM4 11h5v5H4zM4 18h5v5H4z" fill="#e0432b"/><rect x="10" y="22" width="14" height="10" fill="#c2c2c2"/><path d="M22 14v16M28 20l-8 14" stroke="#9a9a9a" stroke-width="2"/><circle cx="22" cy="38" r="4" fill="none" stroke="#1ba1e2" stroke-width="2.500"/><circle cx="32" cy="18" r="3" fill="none" stroke="#1ba1e2" stroke-width="2.500"/></svg></div>
    </div>
    <div class="tray">
      <svg class="tr-chev" viewBox="0 0 20 12"><path d="M1 11l9-9 9 9" fill="none" stroke="#eee" stroke-width="1.300"/></svg>
      <svg class="tr-ic" viewBox="0 0 26 30"><circle cx="12" cy="13" r="11" fill="none" stroke="#eee" stroke-width="1.500"/><path d="M1 13h22M12 2c-6 6-6 16 0 22M12 2c6 6 6 16 0 22" fill="none" stroke="#eee" stroke-width="1.200"/><circle cx="17" cy="20" r="7" fill="#2d1a46" stroke="#eee" stroke-width="1.300"/><path d="M13 24l8-8" stroke="#eee"/></svg>
      <svg class="tr-ic" viewBox="0 0 26 30"><path d="M2 11h5l7-6v20l-7-6H2z" fill="none" stroke="#eee" stroke-width="1.300"/><path d="M18 10c2 3 2 7 0 10" fill="none" stroke="#eee" stroke-width="1.300"/><path d="M22 7c3 5 3 11 0 16" fill="none" stroke="#777" stroke-width="1.300"/></svg>
      <svg class="tr-ic batt" viewBox="0 0 26 30"><rect x="8" y="8" width="16" height="14" rx="2" fill="none" stroke="#eee" stroke-width="1.400"/><rect x="8" y="8" width="7" height="14" fill="#eee"/><path d="M1 6h8v7H1zM3 1v5M7 1v5M5 13v10" stroke="#eee" stroke-width="1.400" fill="#eee"/></svg>
      <div class="clock"><span>1:31 PM</span><span>11/5/2024</span></div>
      <span class="badge">4</span>
    </div>
  </footer>
</div>
</body>
</html>
```
FILE: styles.css
```css
*{box-sizing:border-box}
html,body{margin:0;padding:0;height:100%}
body{font-family:"Noto Sans","Open Sans",sans-serif;color:#252423;overflow:hidden;background:#fff}
.defs{position:absolute}
.k{fill:none;stroke:#484644;stroke-width:1.800}
.l{fill:none;stroke:#2b88d8;stroke-width:1.700}
.l2{fill:none;stroke:#0f6cbd;stroke-width:2.500}
.b{fill:#7ab8ea;stroke:#0f6cbd;stroke-width:1.600}
.g{fill:#bdbdbd;stroke:#8a8886;stroke-width:1.200}
.w{fill:#fff;stroke:#484644;stroke-width:1.600}
.wl{fill:none;stroke:#fff;stroke-width:1}
.n{font:11px "Noto Sans",sans-serif;fill:#2b88d8}
.rl{font:bold 21px "Noto Sans",sans-serif;fill:#2b78c4}
.ta{font:27px "Noto Sans",sans-serif;fill:#2b88d8}
.fx{font:italic 22px "Liberation Serif",serif;fill:#a19f9d}
.xl{font:bold 13px "Noto Sans",sans-serif;fill:#fff}
.dax{font:bold 8px "Noto Sans",sans-serif;fill:#666}
.tk-x{font:bold 20px "Liberation Sans",sans-serif;fill:#2f7d32}
.tk-w{font:bold 13px "Liberation Sans",sans-serif;fill:#2a5caa}

.app{width:1920px;height:1080px;display:flex;flex-direction:column}

/* title bar */
.titlebar{height:51px;background:#3b3a39;color:#fff;display:flex;align-items:center;flex:none}
.tb-save{width:24px;height:24px;margin-left:24px}
.tb-undo{width:22px;height:24px;margin-left:22px}
.tb-redo{width:22px;height:24px;margin-left:23px}
.tb-title{margin:7px 0 0 14px;font-size:17px;letter-spacing:-.1px;white-space:nowrap;width:570px}
.tb-caret{width:0;height:0;border:6px solid transparent;border-top:7px solid #fff;border-bottom:0;margin-left:-1px;margin-top:-4px}
.tb-search{position:absolute;left:889px;top:8px;width:600px;height:36px;background:#d2d2d0;border-radius:3px;display:flex;align-items:center;color:#2f5e5b;font-size:19px}
.tb-sicon{width:24px;height:24px;color:#333;margin:0 16px 0 26px}
.tb-sign{position:absolute;left:1600px;top:13px;font-size:17px;line-height:28px}
.tb-avatar{position:absolute;left:1670px;top:11px;width:30px;height:30px}
.tb-win{position:absolute;left:1747px;top:19px;display:flex;gap:50px}
.tb-win svg{width:16px;height:16px}

/* tabs */
.tabs{height:49px;background:#fafafa;display:flex;align-items:flex-start;padding-left:34px;gap:46px;flex:none;position:relative;font-size:20px}
.tab{height:47px;line-height:48px;position:relative;white-space:nowrap}
.t-file{margin-right:10px}
.tab.on{font-weight:500;color:#1b1a19}
.tab.on::after{content:"";position:absolute;left:0;right:0;bottom:0;height:5px;background:#117865}
.share{position:absolute;left:1786px;top:6px;width:125px;height:36px;border:0;border-radius:5px;background:#117865;color:#fff;display:flex;align-items:center;font:16.5px "Noto Sans",sans-serif;padding:0 0 0 10px}
.share svg{width:24px;height:24px;margin-right:13px;flex:none}
.share .share-chev{width:18px;height:18px;margin:0 0 0 6px}

/* ribbon */
.ribbon{height:140px;background:#fafafa;display:flex;padding-top:5px;position:relative;flex:none;box-shadow:inset 0 -1px 0 #f0f0f0}
.grp{height:132px;border-right:1px solid #d2d0ce;display:flex;flex-direction:column;flex:none}
.grp-body{flex:1;display:flex;min-height:0}
.grp-lbl{height:22px;text-align:center;font-size:14px;line-height:22px;color:#484644;padding-top:3px}
.g-clip{width:121px}
.g-data{width:462px}
.g-query{width:173px}
.g-insert{width:611px}
.g-calc{width:278px}
.g-sens{width:110px}
.g-share{width:88px}
.g-cop{width:48px;border:0;overflow:hidden}
.g-clip .grp-body{padding-left:17px}
.g-data .grp-body{padding-left:10px}
.g-query .grp-body{padding-left:17px}
.g-insert .grp-body{padding-left:6px}
.g-calc .grp-body{padding-left:14px}
.big{display:flex;flex-direction:column;align-items:center;padding-top:9px;font-size:16px;line-height:24px;flex:none;white-space:nowrap}
.big .lbl:first-of-type{margin-top:3px}
.lbl{display:block;height:24px;color:#3b3a39}
.dis{color:#c8c6c4}
.ico-46{width:46px;height:46px}
.ico-paste{width:40px;height:46px}
.ico-tb{width:48px;height:40px;margin:2px 0 4px}
.ico-cop{width:28px;height:44px;margin:0 0 2px 5px;align-self:flex-start}
.paste{width:50px}
.getdata{width:64px}
.w74{width:74px}
.w70{width:70px}
.w64{width:64px}
.w101{width:101px}
.w84{width:84px}
.w62{width:62px}
.wfull{width:100%}
.copilot{width:48px;align-items:flex-start;padding-left:15px}
.cv{width:10px;height:10px;color:#3b3a39;display:inline-block}
.dis .cv{color:#c8c6c4}
.mini{display:flex;flex-direction:column;gap:12px;margin:6px 0 0 6px}
.mini svg{width:24px;height:24px;display:block}
.slist{display:flex;flex-direction:column;font-size:16.500px}
.c2{width:198px;margin-left:8px}
.srow{height:36px;display:flex;align-items:center;gap:5px;color:#3b3a39;white-space:nowrap;margin-top:0}
.srow:first-child{margin-top:1px}
.srow svg{width:22px;height:24px;flex:none}
.srow .cv{width:10px;height:10px;margin-left:4px}
.c3 .srow{gap:6px}
.c3 .srow svg:first-child{width:24px}
.gallery{width:379px;height:92px;margin-top:10px;border:1px solid #8a8886;background:#fff;display:flex;flex:none}
.gal-grid{width:354px;display:grid;grid-template-columns:repeat(9,39px);grid-auto-rows:44px;padding:0 0 0 1px;align-items:center;justify-items:center}
.gal-grid svg{width:28px;height:28px}
.gal-more{flex:1;border-left:1px solid #8a8886;margin:1px 0;display:flex;align-items:center;justify-content:center}
.rb-collapse{position:absolute;left:1900px;top:124px;width:13px;height:9px}

/* main */
.work{height:733px;display:flex;flex:none;position:relative}
.rail{width:61px;background:#fafafa;padding-top:0;flex:none;border-right:1px solid #eee}
.rail-btn{height:60px;display:flex;align-items:center;justify-content:center;position:relative}
.rail-btn svg{width:24px;height:24px}
.rail-btn.on::before{content:"";position:absolute;left:0;top:0;bottom:0;width:3px;background:#117865}
.center{width:1269px;display:flex;flex-direction:column;flex:none}
.stage{height:679px;display:flex;flex:none}
.canvas{width:1219px;background:#000;position:relative;overflow:hidden;flex:none}
.filters{width:50px;background:#fff;position:relative;flex:none}
.f-dbl{position:absolute;left:15px;top:19px;width:20px;height:20px;color:#333}
.f-fun{position:absolute;left:19px;top:62px;width:18px;height:18px}
.f-txt{position:absolute;left:9px;top:92px;writing-mode:vertical-rl;font-size:21px;line-height:26px;font-weight:600;color:#252423}
.dots{position:absolute;left:15px;top:-10px;width:1189px;height:679px;border:3px dotted #8a8886}

.panel{position:absolute;background:#390408;border-radius:26px}
.p1{left:31px;top:13px;width:728px;height:210px;padding:13px 0 0 14px}
.p2{left:31px;top:233px;width:336px;height:274px;padding:12px 0 0 13px}
.p3{left:370px;top:233px;width:389px;height:132px;padding:12px 0 0 8px}
.p4{left:374px;top:370px;width:370px;height:174px;border:3px solid #000;border-radius:29px;padding:14px 0 0 14px}
.p5{left:21px;top:516px;width:379px;height:146px;padding:13px 0 0 14px}

.tbl{font-size:11px;color:#3b2a26}
.t1{width:692px}
.t2{width:227px}
.t3{width:322px}
.t4{width:332px}
.t5{width:296px}
.row{display:grid;height:18.6px;align-items:center;position:relative}
.row span{padding:0 4px;height:100%;line-height:18px;white-space:nowrap;overflow:hidden}
.row .r{text-align:right}
.hd{height:27px;color:#fff;border-bottom:2px solid #2f6bb5;align-items:start;font-size:11.400px}
.t2 .hd,.t3 .hd{height:28px}
.t4 .hd{font-size:11.700px}
.hd span{padding:0 0 0 4px;line-height:22px;height:22px;overflow:visible}
.t1 .row{grid-template-columns:47px 87px 125.500px 95.500px 103px 38px 52px 37px 52px 55px}
.t2 .row{grid-template-columns:95.500px 57px 74.500px}
.t3 .row{grid-template-columns:103px 46px 45.600px 42px 39.400px 46px}
.t5 .row{grid-template-columns:102px 33px 42px 42px 38px 39px}
.t4 .row{grid-template-columns:48.600px 196.400px 87px}
.o{background:#f9d1c0;border-bottom:1px solid #6e4a43}
.o span{border-right:1px solid #edbfab}
.e{background:#000;color:#fff;font-weight:500}
.last{border-bottom:2px solid #2f6bb5}
.e.last{border-bottom:2px solid #2f6bb5}
.tot{color:#fff;font-weight:700;height:22px}
.m{background:#f4c2ac;color:#3b2a26}
.m span{border-right:1px solid #e3ad96}
.m span:first-child{border-right:1.500px solid #7ea7d8}
.sep{border-bottom:1px solid #c69c8a}
.bd{font-weight:700}
.sort{position:relative}
.sort::after{content:"";position:absolute;left:5px;top:18px;border:3.500px solid transparent;border-top:5px solid #fff;border-bottom:0}
.sort.up::after{border-top:0;border-bottom:5px solid #fff}
.sb-h{position:absolute;left:14px;top:188px;width:692px;height:8px;border:1px solid #8c7a7a;border-radius:4px;background:#5a3a3c}
.sb-v{position:absolute;left:707px;top:13px;width:7px;height:175px;border-radius:4px;background:#8a6f70}
.sb-v-thumb{height:60px;background:#5a3a3c;border-radius:4px}

.t5 .hd{border-bottom:2px solid #2f85d8}
.t3 .hd{border-bottom:2px solid #6c6a8a}
.t4 .hd{border-bottom:2px solid #3c4f80}

.chart{position:absolute;left:764px;top:0;width:438px;height:202px;background:#390408}
.chart svg{display:block}
.c-title{font:600 42px "Noto Sans",sans-serif;fill:#fff}
.c-axt{font:600 27px "Noto Sans",sans-serif;fill:#eee}
.c-y{font:30px "Noto Sans",sans-serif;fill:#f4e8e0}
.c-grid{stroke:#000;stroke-width:3;stroke-dasharray:3 9;fill:none}
.c-line{fill:none;stroke:#f6c6ae;stroke-width:7.500;stroke-dasharray:20 20}
.c-m text{font:30px "Noto Sans",sans-serif;fill:#eee;text-anchor:end}
.c-q text{font:30px "Noto Sans",sans-serif;fill:#eee;text-anchor:middle}
.c-month{font:27px "Noto Sans",sans-serif;fill:#20100f;text-anchor:middle}
.c-grid+.c-grid{stroke:#cfcfcf}
.pill{position:absolute;left:878px;top:617px;width:319px;height:44px;border-radius:22px;background:#390408;color:#fff;font-size:14.200px;line-height:34px;text-align:center}

/* page bar */
.pagebar{height:54px;background:#f3f2f1;display:flex;flex:none;border-bottom:1px solid #e1dfdd}
.pb-tools{width:191px;display:flex;align-items:flex-start;flex:none;position:relative;padding-left:6px}
.pb-dev{width:51px;height:46px;display:flex;align-items:center;justify-content:center;position:relative;flex:none}
.pb-dev svg{width:30px;height:26px}
.pb-dev.ph svg{width:20px;height:32px}
.pb-dev.on::after{content:"";position:absolute;left:9px;right:6px;bottom:0;height:4px;background:#117865;border-radius:2px}
.pb-dev.ph{margin-left:17px}
.pb-arrow{width:0;height:0;margin-top:22px;border:5px solid transparent;border-left:7px solid #c8c6c4;border-right:0;margin-left:28px}
.pb-arrow.l{border-left:0;border-right:7px solid #c8c6c4;margin-left:9px}
.pg{width:114.700px;background:#fff;border-left:1px solid #c8c6c4;text-align:center;font-size:16.500px;line-height:54px;color:#3b3a39;flex:none;white-space:nowrap}
.pg.on{font-weight:600;border-bottom:6px solid #117865;color:#252423}
.pg-add{width:58px;background:#117865;color:#fff;text-align:center;font-size:26px;font-weight:700;line-height:50px;flex:none}

/* panes */
.format{width:270px;background:#f3f2f1;border-left:1px solid #e1dfdd;position:relative;overflow:hidden;flex:none}
.build{width:272px;background:#f3f2f1;border-left:1px solid #e1dfdd;flex:none;padding:0 13px 0 12px}
.p-head{height:62px;display:flex;align-items:center;position:relative}
.p-head h2{margin:0;font-size:22px;font-weight:600;color:#252423;line-height:54px;height:58px}
.format .p-head{padding-left:12px}
.p-dots{position:absolute;top:12px;font-size:24px;letter-spacing:1.500px;line-height:30px;color:#333}
.format .p-dots{left:203px}
.build .p-dots{left:194px}
.p-dbl{position:absolute;width:18px;height:18px;top:20px;color:#333}
.format .p-dbl{left:239px}
.build .p-dbl{left:229px}
.f-search{margin-left:11px;width:246px;height:38px;border:1px solid #8a8886;border-radius:3px;display:flex;align-items:center;font-size:19px;color:#484644;padding-top:0}
.f-search span{margin-top:3px}
.fs-i{width:22px;height:22px;margin:0 9px 0 11px;color:#555}
.sec{height:61px;border-bottom:1px solid #e1dfdd;display:flex;align-items:center;padding:3px 0 0 14px;font-size:17px;font-weight:500;color:#323130;margin-right:10px}
.sec.first{margin-top:18px}
.sec.nob{border:0;padding-left:9px;padding-top:1px}
.sec-r{width:12px;height:20px;margin-right:10px;color:#333}
.sec-d{width:22px;height:22px;margin-right:4px;color:#333}
.wp{position:absolute;left:0;right:0;top:362px;height:358px;background:#e1dfdd;padding:12px 0 0 11px}
.wp-card{width:246px;height:346px;background:#f3f2f1;border-radius:6px 6px 0 0;padding:12px 12px 0;display:flex;flex-direction:column;align-items:flex-start}
.wp-card label{font-size:16px;line-height:24px;color:#3b3a39}
.fld{background:#fff;border:1px solid #8a8886;border-radius:3px;display:flex;align-items:center;font-size:16px;color:#3b3a39;position:relative}
.clr{width:78px;height:36px;margin:6px 0 13px;padding-left:6px}
.swatch{width:24px;height:24px;background:#000;border:1px solid #666}
.f-chev{position:absolute;right:5px;top:8px;width:20px;height:20px;color:#444}
.brw{width:222px;height:38px;margin:5px 0 13px;padding-left:6px}
.brw-i{position:absolute;right:6px;top:7px;width:18px;height:18px}
.nrm{width:222px;height:36px;margin:5px 0 19px;padding-left:12px;background:#f3f2f1;border-color:#c8c6c4;color:#a19f9d}
.nrm .f-chev{right:8px}
.tr-row{display:flex;align-items:center;margin-top:14px}
.pct{width:80px;height:36px;padding-left:6px;color:#8a8886}
.spin{position:absolute;right:5px;top:6px;display:flex;flex-direction:column;gap:10px}
.spin svg{width:12px;height:6px;display:block}
.slider{width:126px;height:8px;margin-left:8px;background:#c8c6c4;position:relative;margin-top:2px}
.knob{position:absolute;left:0;top:-6px;width:20px;height:20px;border-radius:50%;background:#fff;border:3px solid #777}
.f-sb{position:absolute;left:260px;top:118px;width:9px;height:459px;background:#cfcdcb;border-radius:5px 5px 0 0}
.b-lbl{font-size:15.500px;line-height:22px;color:#3b3a39;margin-top:-5px}
.b-lbl.data{margin-top:15px;line-height:22px}
.sugg{width:246px;height:279px;margin-top:7px;background:#fff;border:1px solid #a19f9d;border-radius:3px;display:grid;grid-template-columns:repeat(6,39.200px);grid-auto-rows:39px;padding:2px 0 0 3px;align-items:center;justify-items:center}
.sugg svg{width:28px;height:28px}
.s-more{font-size:20px;letter-spacing:1px;color:#333}
.adddata{width:246px;height:57px;margin-top:6px;border:1px dashed #605e5c;display:flex;align-items:center;justify-content:center}
.addbtn{width:232px;height:44px;background:#fff;border:1px solid #605e5c;border-radius:3px;font:500 16px "Noto Sans",sans-serif;color:#252423}

.rrail{width:48px;background:#faf9f8;border-left:1px solid #e1dfdd;flex:none;position:relative}
.rr-top{height:48px;display:flex;align-items:center;justify-content:center}
.rr-top svg{width:22px;height:28px}
.rr-sel{height:48px;background:#e1dfdd;border:1px solid #8a8886;display:flex;align-items:center;justify-content:center}
.rr-sel svg{width:28px;height:30px}
.rr-plus{height:46px;display:flex;align-items:center;justify-content:center}
.rr-plus svg{width:26px;height:26px}
.rr-gear{position:absolute;left:0;right:0;bottom:0;height:49px;border-top:1px solid #e1dfdd;display:flex;align-items:center;justify-content:center}
.rr-gear svg{width:30px;height:30px}

/* status */
.status{height:34px;background:#f3f2f1;border-top:1px solid #e1dfdd;position:relative;display:flex;align-items:center;font-size:16.200px;color:#484644;flex:none;padding-left:6px}
.st-zoom{position:absolute;left:1601px;top:0;height:33px;display:flex;align-items:center}
.z-m{width:15px;font-size:16px;font-weight:600}
.z-track{width:150px;height:1px;background:#605e5c;position:relative}
.z-tick{position:absolute;left:75px;top:-3px;width:1px;height:7px;background:#605e5c}
.z-thumb{position:absolute;left:40px;top:-8px;width:6px;height:17px;background:#605e5c}
.z-p{margin-left:7px;font-size:19px;font-weight:500}
.z-v{margin-left:21px;font-size:17px;width:44px;white-space:nowrap}
.z-fit{width:24px;height:16px;margin-left:22px}

/* taskbar */
.taskbar{height:73px;flex:none;border-top:1px solid #000;display:flex;align-items:center;padding-left:24px;position:relative;background:linear-gradient(90deg,#1c2422 0,#1c2523 24%,#112a33 38%,#1b2a56 42%,#2b1b5a 48%,#2e1565 62%,#351a50 75%,#2a1c33 100%)}
.tk-widget{width:36px;height:34px;flex:none}
.tk-btn{width:66px;height:60px;display:flex;align-items:center;justify-content:center;flex:none;position:relative}
.tk-btn svg{width:36px;height:36px}
.start{margin-left:335px}
.tk-search{width:328px;height:48px;margin-left:6px;border-radius:24px;background:linear-gradient(90deg,#2c3b3c,#323f52);border:1px solid #3c4a4c;display:flex;align-items:center;color:#d8d8d8;font-size:19px;flex:none}
.tk-si{width:24px;height:24px;color:#eee;margin:0 13px 0 17px}
.tk-apps{display:flex;margin-left:4px}
.dot::after{content:"";position:absolute;left:30px;bottom:0;width:6px;height:6px;border-radius:50%;background:#9a93a8}
.act{background:rgba(255,255,255,.06);border-radius:6px;width:60px;margin:0 3px}
.act::after{content:"";position:absolute;left:18px;bottom:-1px;width:24px;height:5px;border-radius:3px;background:#d8a4e0}
.tray{position:absolute;left:1614px;top:0;height:72px;display:flex;align-items:center;color:#fff}
.tr-chev{width:20px;height:12px;margin-left:5px}
.tr-ic{width:26px;height:30px;margin-left:8px}
.tray .tr-chev+.tr-ic{margin-left:18px}
.tr-ic.batt{margin:0 -6px 0 14px}
.clock{width:105px;display:flex;flex-direction:column;align-items:flex-end;font-size:15.500px;line-height:22px}
.badge{width:24px;height:24px;border-radius:50%;background:#d8a4e0;color:#222;font-size:14px;text-align:center;line-height:24px;margin-left:10px}
```
